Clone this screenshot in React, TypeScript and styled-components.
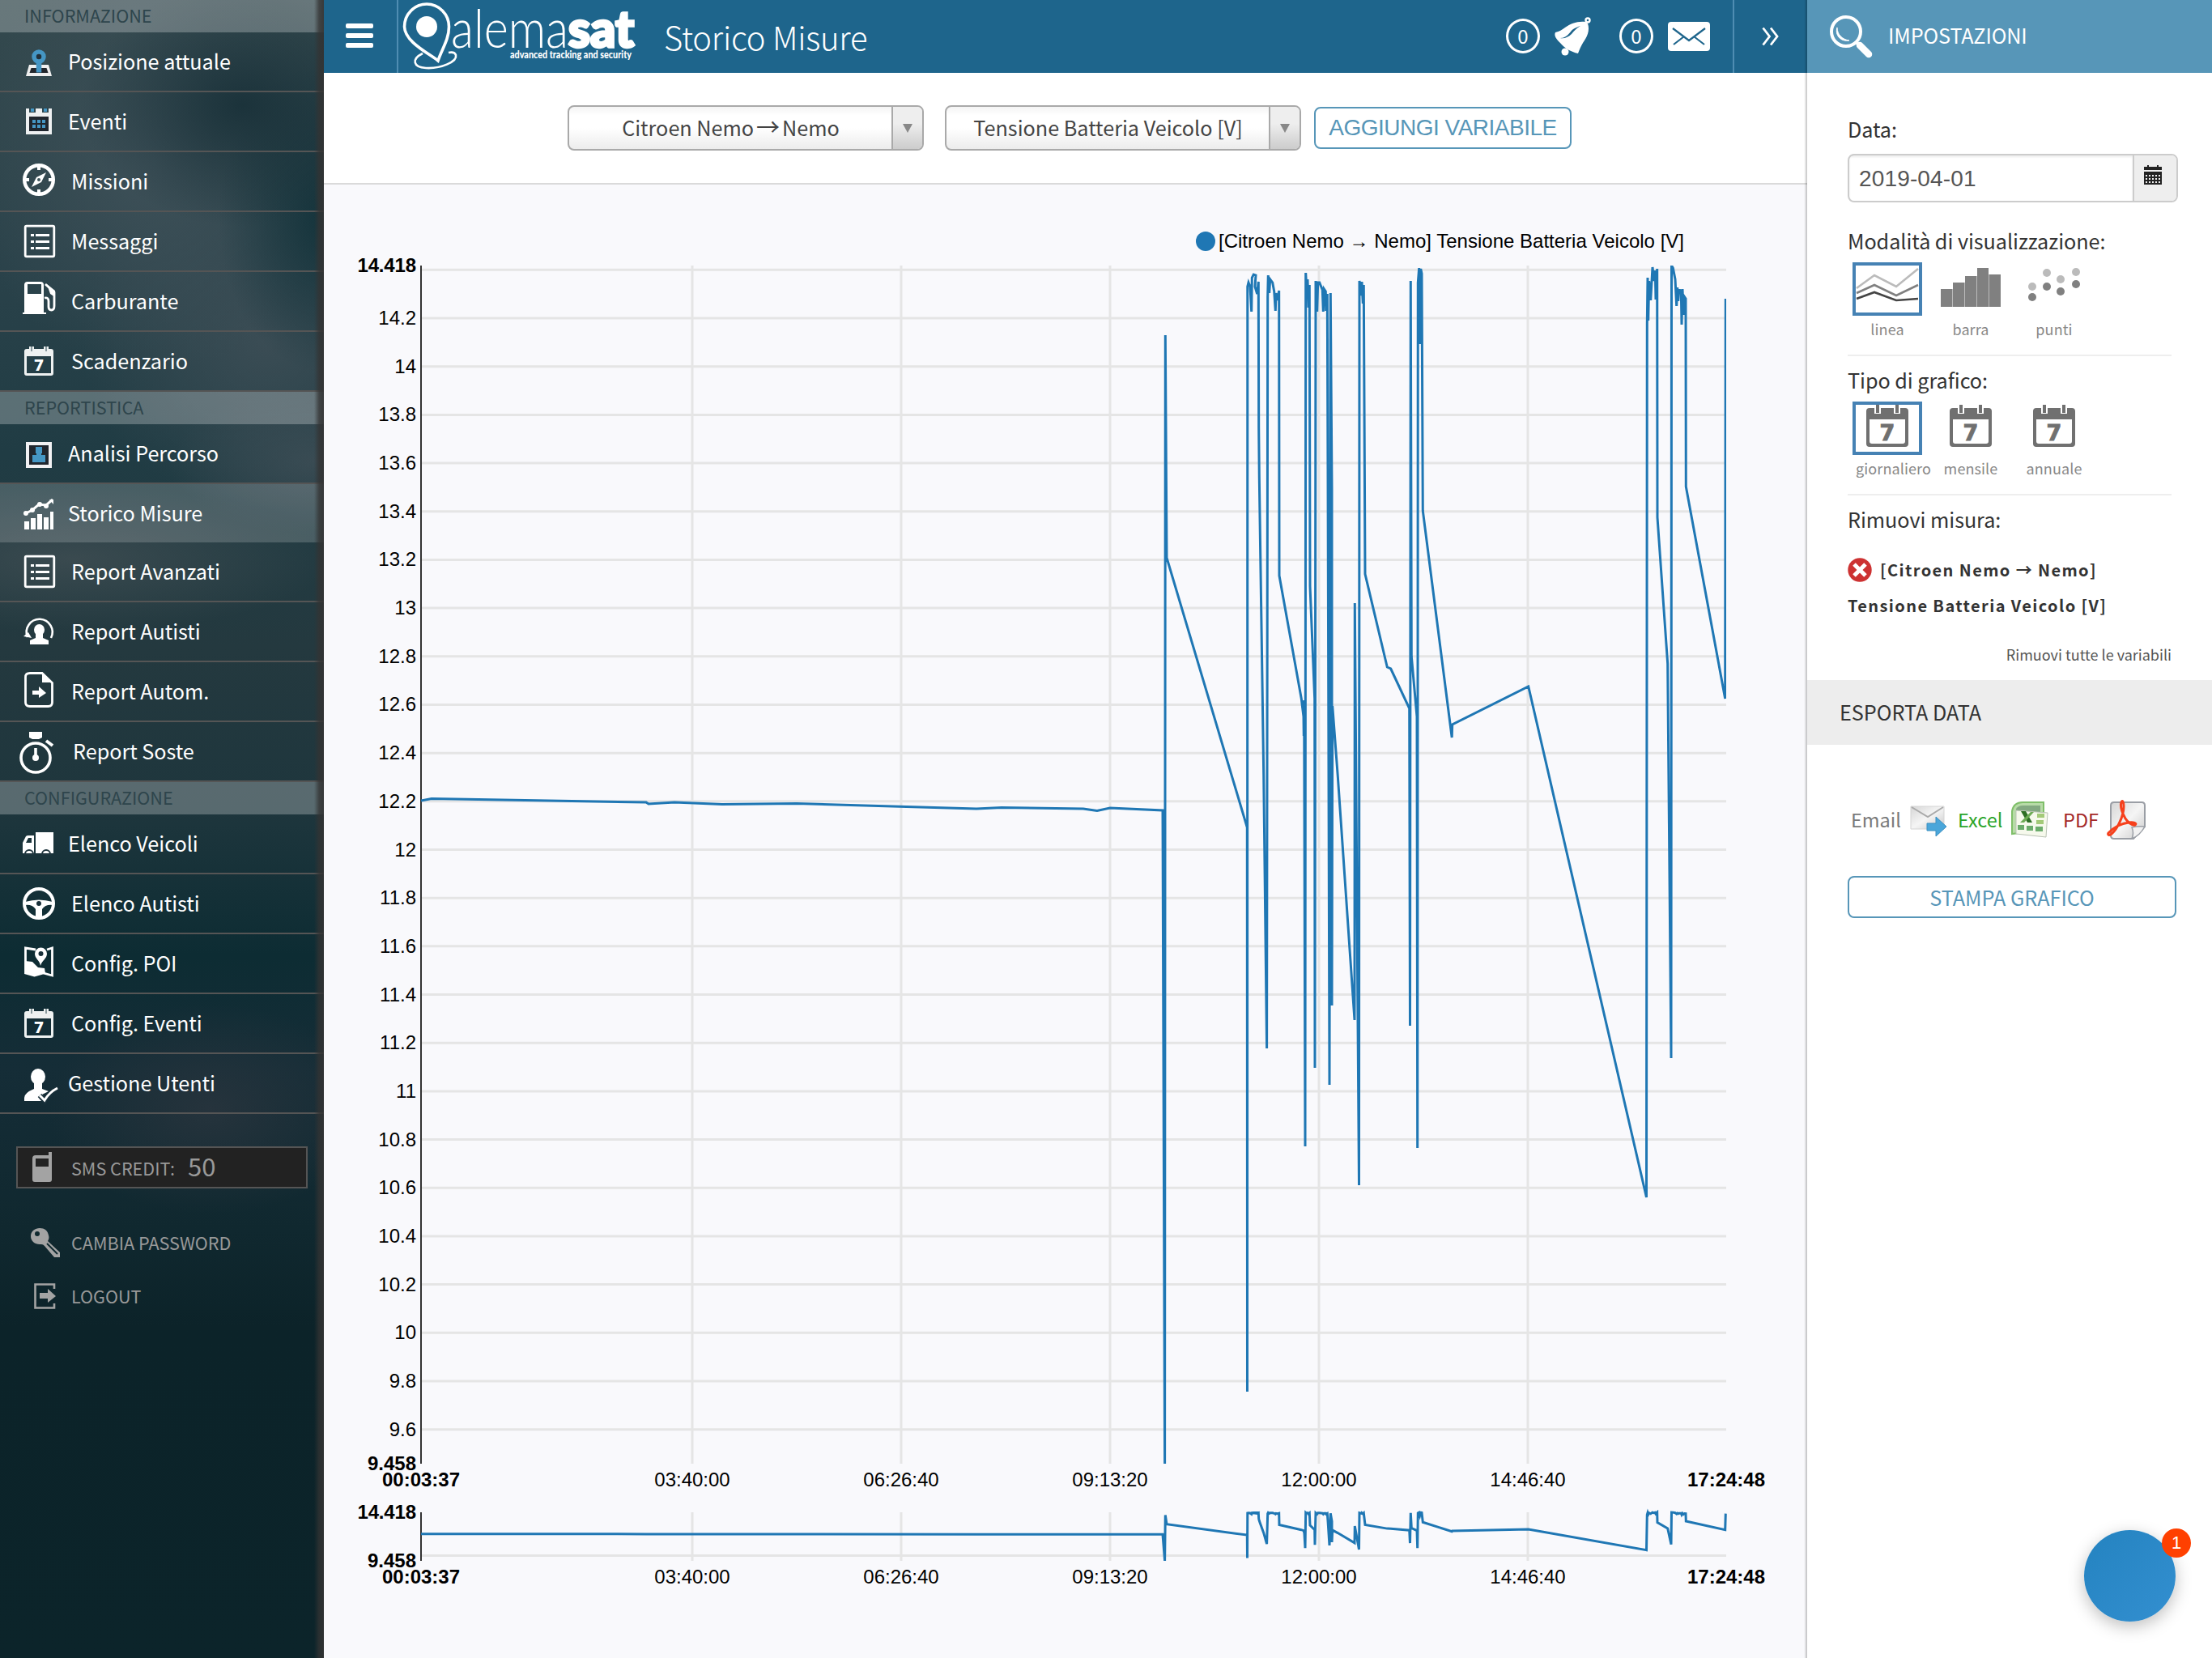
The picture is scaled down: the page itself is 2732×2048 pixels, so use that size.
import React from 'react';
import styled, { createGlobalStyle } from 'styled-components';

const sans = `'Noto Sans CJK SC', 'Noto Sans', sans-serif`;
const arial = `'Liberation Sans', Arial, sans-serif`;

const GlobalStyle = createGlobalStyle`
  * { box-sizing: border-box; }
  body {
    margin: 0;
    background: #fff;
    font-family: ${sans};
    color: #333;
  }
  svg { display: block; overflow: visible; flex-shrink: 0; }
`;

/* ---------- sidebar icons ---------- */

const PositionIcon = () => (
  <>
    <path d="M12 30h24l4 14H8z" fill="#efefef" />
    <path d="M14.500 34h19l2 6h-23z" fill="#22262c" />
    <path d="M24 24v15.500" stroke="#4596c4" strokeWidth="6.500" />
    <circle cx="24" cy="20" r="6" fill="#22303a" stroke="#4596c4" strokeWidth="5.500" />
  </>
);

const EventsIcon = () => (
  <>
    <rect x="8" y="10" width="32" height="32" fill="#eef0f1" />
    <rect x="12" y="20" width="24" height="18" fill="#20262e" />
    <path d="M12 9h8v6h-8zM28 9h8v6h-8z" fill="#2d444b" />
    <path d="M14 10h4v4h-4zM30 10h4v4h-4zM16 24h4v4h-4zM22 24h4v4h-4zM28 24h4v4h-4zM16 30h4v4h-4zM22 30h4v4h-4zM28 30h4v4h-4z" fill="#4596c4" />
  </>
);

const CompassIcon = () => (
  <>
    <circle cx="24" cy="24" r="17.800" fill="none" stroke="#fff" strokeWidth="4.400" />
    <path d="M24 6v6M24 36v6M6 24h6M36 24h6" stroke="#fff" strokeWidth="4" />
    <path d="M33 15 27 27 15 33 21 21z" fill="#fff" />
    <circle cx="24" cy="24" r="2" fill="#40565d" />
  </>
);

const ListIcon = () => (
  <>
    <rect x="7.200" y="7.200" width="35.600" height="37.600" rx="1.500" fill="none" stroke="#fff" strokeWidth="2.800" />
    <path d="M14 18.500h4M14 26.500h4M14 34.500h4M20 18.500h17M20 26.500h17M20 34.500h17" stroke="#fff" strokeWidth="3" />
  </>
);

const FuelIcon = () => (
  <>
    <path d="M6 40V6q0-4 4-4h16q4 0 4 4v34h3v2H4v-2zM10 5v12h17V5z" fill="#fff" fillRule="evenodd" />
    <path d="M31 22q5-1 5 4v7q0 4 3.500 4T43 32V15L32 5" fill="none" stroke="#fff" strokeWidth="2.800" />
    <path d="M34 5 44 13v8l-6-4z" fill="#fff" />
  </>
);

const CalendarSmallIcon = () => (
  <>
    <path d="M6 14q0-3 3-3h3V8h6v3h12V8h6v3h3q3 0 3 3v27q0 3-3 3H9q-3 0-3-3zM9 20v21h30V20z" fill="#eef1f1" fillRule="evenodd" />
    <path d="M15 8v6M33 8v6" stroke="#8a9a9e" strokeWidth="2" />
    <text x="24" y="38" fontSize="19" fontWeight="700" fontFamily="DejaVu Sans" textAnchor="middle" fill="#fff">7</text>
  </>
);

const RouteIcon = () => (
  <>
    <rect x="10" y="14" width="28" height="28" fill="#20262e" stroke="#f1f1f3" strokeWidth="4" />
    <path d="M20 18h8v8h-1v2h5v9H16v-9h5v-2h-1z" fill="#4596c4" />
  </>
);

const HistoryIcon = () => (
  <>
    <path d="M6 36h6v10H6zM14 32h6v14h-6zM22 27h6v19h-6zM30 31h6v15h-6zM38 24h4v22h-4z" fill="#fff" />
    <path d="M8 26l8-4 8-7 9 1 8-7" fill="none" stroke="#fff" strokeWidth="3" />
    <circle cx="8" cy="26" r="3" fill="#fff" />
    <circle cx="16" cy="22" r="3" fill="#fff" />
    <circle cx="25" cy="15" r="3" fill="#fff" />
    <circle cx="33" cy="17" r="3" fill="#fff" />
    <path d="M37 9h5v6z" fill="#fff" />
  </>
);

const DriverReportIcon = () => (
  <>
    <path d="M10 33a16 16 0 1 1 29 1" fill="none" stroke="#fff" strokeWidth="2.600" />
    <path d="M5 32l6-5 4 7z" fill="#fff" />
    <ellipse cx="24.500" cy="24" rx="6.500" ry="7" fill="#fff" />
    <path d="M20 28h9v6l7 3v5H13v-5l7-3z" fill="#fff" />
  </>
);

const AutoReportIcon = () => (
  <>
    <path d="M13 3.500h15l12.500 12v24q0 5-5 5H13q-5.500 0-5.500-5V8.500q0-5 5.500-5z" fill="none" stroke="#fff" strokeWidth="2.800" />
    <path d="M28 3v12h12z" fill="#fff" />
    <path d="M16 25h8v-5l9 8-9 6v-4h-8z" fill="#fff" />
  </>
);

const StopwatchIcon = () => (
  <>
    <circle cx="20" cy="34" r="18" fill="none" stroke="#fff" strokeWidth="3.600" />
    <path d="M12 2h16v7l-4 2h-8l-4-2z" fill="#fff" />
    <path d="M33 13l8 6" stroke="#fff" strokeWidth="4" />
    <path d="M20 22v11" stroke="#fff" strokeWidth="3.600" />
    <circle cx="20" cy="34" r="4" fill="#fff" />
  </>
);

const TruckIcon = () => (
  <>
    <path d="M20 12h22v26H20z" fill="#fff" />
    <path d="M4 25l4-8q1-1 3-1h7v22H4zM8 25h7v-6h-4z" fill="#fff" fillRule="evenodd" />
    <path d="M7 39a5 5 0 0 1 10 0zM28 39a5 5 0 0 1 10 0z" fill="#fff" stroke="#1f363e" strokeWidth="2" />
    <path d="M6 39h12M27 39h12" stroke="#1f363e" strokeWidth="2" />
  </>
);

const WheelIcon = () => (
  <>
    <circle cx="24" cy="26" r="18" fill="none" stroke="#fff" strokeWidth="4" />
    <path d="M7 24q17-5 34 0v4q-9-1-13 5v10h-8V33q-4-6-13-5z" fill="#fff" />
    <circle cx="24" cy="26" r="3" fill="#19303a" />
  </>
);

const MapIcon = () => (
  <>
    <path d="M20 9 7.500 7v31l11 3 11-3 11 3V7L34 9" fill="none" stroke="#fff" strokeWidth="2.800" />
    <path d="M7 23l9 1 7 7 8 1 1 6-12 3-13-3z" fill="#fff" />
    <path d="M26 29c-1-7-7-9-7-15a7.500 7.500 0 0 1 15 0c0 6-6 8-8 15z" fill="#fff" />
    <circle cx="26.500" cy="14" r="3" fill="#19303a" />
  </>
);

const UserIcon = () => (
  <>
    <ellipse cx="23" cy="18" rx="9" ry="10" fill="#fff" />
    <path d="M18 26h10v7l8 3-8 4 5 7-5 1H6v-4q0-6 12-11z" fill="#fff" />
    <path d="M25 41l6 7q6-11 16-16" fill="none" stroke="#19303a" strokeWidth="6" />
    <path d="M25 41l6 6q6-10 16-15" fill="none" stroke="#fff" strokeWidth="3" />
  </>
);

/* ---------- sidebar ---------- */

const menu = [
  {
    title: 'INFORMAZIONE',
    items: [
      { label: 'Posizione attuale', icon: PositionIcon, left: 84 },
      { label: 'Eventi', icon: EventsIcon, left: 84 },
      { label: 'Missioni', icon: CompassIcon, left: 88 },
      { label: 'Messaggi', icon: ListIcon, left: 88 },
      { label: 'Carburante', icon: FuelIcon, left: 88 },
      { label: 'Scadenzario', icon: CalendarSmallIcon, left: 88 },
    ],
  },
  {
    title: 'REPORTISTICA',
    items: [
      { label: 'Analisi Percorso', icon: RouteIcon, left: 84 },
      { label: 'Storico Misure', icon: HistoryIcon, left: 84, active: true },
      { label: 'Report Avanzati', icon: ListIcon, left: 88 },
      { label: 'Report Autisti', icon: DriverReportIcon, left: 88 },
      { label: 'Report Autom.', icon: AutoReportIcon, left: 88 },
      { label: 'Report Soste', icon: StopwatchIcon, left: 90 },
    ],
  },
  {
    title: 'CONFIGURAZIONE',
    items: [
      { label: 'Elenco Veicoli', icon: TruckIcon, left: 84 },
      { label: 'Elenco Autisti', icon: WheelIcon, left: 88 },
      { label: 'Config. POI', icon: MapIcon, left: 88 },
      { label: 'Config. Eventi', icon: CalendarSmallIcon, left: 88 },
      { label: 'Gestione Utenti', icon: UserIcon, left: 84 },
    ],
  },
];

const SideBar = () => (
  <Aside>
    {menu.map(group => (
      <React.Fragment key={group.title}>
        <GroupTitle>{group.title}</GroupTitle>
        {group.items.map(({ label, icon: Icon, left, active }: any) => (
          <MenuItem key={label} $active={active}>
            <svg width="48" height="52" viewBox="0 0 48 52"><Icon /></svg>
            <MenuLabel $left={left}>{label}</MenuLabel>
          </MenuItem>
        ))}
      </React.Fragment>
    ))}
    <SmsBox>
      <svg width="24" height="38" viewBox="0 0 24 38">
        <path d="M4 4h16V0h4v34q0 3-3 3H3q-3 0-3-3V8q0-4 4-4zM4 8v10h16V8z" fill="#a3a3a3" fillRule="evenodd" />
      </svg>
      <SmsLabel>SMS CREDIT:</SmsLabel>
      <SmsValue>50</SmsValue>
    </SmsBox>
    <FootLink>
      <svg width="36" height="38" viewBox="0 0 36 38">
        <path d="M11 1C5 1 0 5 0 11s5 10 11 10c3 0 4 0 6 2l12 14h7v-6L21 17c1-2 2-4 1-7C21 4 17 1 11 1z" fill="#a3a3a3" />
        <circle cx="8" cy="8" r="3" fill="#10292f" />
        <path d="M20 20l13 13" stroke="#10292f" strokeWidth="2" />
      </svg>
      CAMBIA PASSWORD
    </FootLink>
    <FootLink>
      <svg width="36" height="34" viewBox="0 0 36 34">
        <path d="M29 8V2.500H5.500v29H29V26" fill="none" stroke="#a3a3a3" strokeWidth="2.600" />
        <path d="M11 13h10V8l10 9-10 8v-5H11z" fill="#a3a3a3" />
      </svg>
      LOGOUT
    </FootLink>
  </Aside>
);

/* ---------- header ---------- */

const Logo = () => (
  <svg width="290" height="90" viewBox="496 0 290 90">
    <path d="M541 75C530 66 500 52 499.500 33a27.500 28 0 0 1 55 0c0 16-9 28-13.500 42z" fill="none" stroke="#fff" strokeWidth="3.600" />
    <circle cx="527" cy="33" r="13" fill="#fff" />
    <path d="M522 66c-14 7-12 17 4 18 19 1 39-8 37-16-1-3-4-4-9-3" fill="none" stroke="#fff" strokeWidth="2.600" />
    <text x="557" y="59" fontFamily="Lato" fontWeight="300" fontSize="67" textLength="145" lengthAdjust="spacingAndGlyphs" fill="#fff">alema</text>
    <text x="702" y="58" fontFamily="Lato" fontWeight="900" fontSize="63" stroke="#fff" strokeWidth="3.500" textLength="81" lengthAdjust="spacingAndGlyphs" fill="#fff">sat</text>
    <text x="630" y="72" fontFamily="Lato" fontWeight="900" fontSize="14" textLength="150" lengthAdjust="spacingAndGlyphs" fill="#fff">advanced tracking and security</text>
  </svg>
);

const Header = () => (
  <TopBar>
    <MenuToggle>
      <Bar /><Bar /><Bar />
    </MenuToggle>
    <LogoBox><Logo /></LogoBox>
    <PageTitle>Storico Misure</PageTitle>
    <Counter>0</Counter>
    <Alert $right={34}>
      <svg width="46" height="48" viewBox="0 0 46 48">
        <circle cx="41" cy="4" r="2.500" fill="none" stroke="#fff" strokeWidth="2.400" />
        <path d="M38 6C28 5 20 8 13 13 9 16 6 18 1 19c-2 4 1 8 6 13 6 7 13 11 22 13 2-5 3-8 6-13 5-7 9-15 6-24z" fill="#fff" />
        <path d="M7 26c9 0 11-7 16-11 3-2 6-3 9-4-5 3-8 6-11 10-4 4-9 6-14 5z" fill="#1e658c" />
        <circle cx="13" cy="43" r="4.500" fill="#fff" />
      </svg>
    </Alert>
    <Counter>0</Counter>
    <Alert $right={28}>
      <svg width="52" height="36" viewBox="0 0 52 36">
        <rect width="52" height="36" rx="4" fill="#fff" />
        <path d="M6 8l20 15L46 8M7 28l13-10M45 28L32 18" fill="none" stroke="#1e658c" strokeWidth="2.200" />
      </svg>
    </Alert>
    <Expand>
      <svg width="22" height="22" viewBox="0 0 22 22">
        <path d="M1.500 0.500l8 10.500-8 10.500M11 0.500l8 10.500-8 10.500" fill="none" stroke="#fff" strokeWidth="2.800" />
      </svg>
    </Expand>
  </TopBar>
);

/* ---------- chart ---------- */

// plot area of the main chart
const LEFT = 520;
const TOP = 328;
const WIDTH = 1612;
const HEIGHT = 1480;
const MINI_TOP = 1868;
const MINI_HEIGHT = 60;
const MIN = 9.458;
const MAX = 14.418;

const line: number[][] = [
  [520, 989], [533, 986.5], [798, 991], [801, 993], [833, 991], [892, 993.5], [984, 992.5], [1206, 999],
  [1237, 997.5], [1338, 999], [1355, 1001.5], [1371, 998], [1436, 1001], [1438.6, 1808], [1439.3, 414],
  [1441, 689], [1540.3, 1022], [1540.5, 1719], [1540.8, 354], [1542, 349], [1544, 354], [1545.7, 385],
  [1546.3, 343], [1548.3, 339], [1551, 340], [1550, 354], [1552.7, 363], [1554.3, 348], [1554.7, 528],
  [1555.3, 590], [1560.7, 956], [1564.6, 1295], [1565.7, 367], [1566.3, 340], [1567.7, 362], [1568.7, 345],
  [1571.7, 349], [1573.7, 360], [1575.3, 384], [1576, 362], [1578, 371], [1579.7, 359], [1580, 711],
  [1607.3, 863], [1610, 885], [1610.3, 909], [1610.7, 865], [1612, 1416], [1612.7, 337], [1613.7, 356],
  [1615, 345], [1616, 380], [1617.3, 352], [1618, 724], [1623.7, 863], [1624, 1319], [1625, 347],
  [1626.7, 385], [1627.7, 349], [1629.7, 349], [1633.3, 358], [1634.3, 385], [1635.3, 357], [1637.3, 360],
  [1637.7, 384], [1639.3, 363], [1640, 579], [1642, 1340], [1643.3, 362], [1645, 604], [1645, 1242],
  [1645.7, 872], [1652.3, 959], [1673, 1260], [1673.3, 745], [1678.5, 1464], [1679, 347], [1681.7, 365],
  [1682, 348], [1683.3, 375], [1684.3, 352], [1686, 709], [1713.3, 824], [1717.7, 826], [1740.7, 875],
  [1741.5, 1267], [1742.3, 347], [1743.3, 811], [1750, 885], [1750.7, 1418], [1751.3, 349], [1752.7, 331],
  [1753.7, 425], [1754.7, 332], [1756, 338], [1757.3, 631], [1793.2, 911], [1793.7, 895], [1887.7, 848],
  [2033.5, 1479], [2034.3, 400], [2035, 343], [2035.7, 396], [2036.7, 347], [2038.7, 371], [2041, 330],
  [2042.7, 347], [2044.3, 334], [2045, 370], [2046.7, 332], [2047, 639], [2059.7, 820], [2064, 1307],
  [2064.5, 328], [2066.3, 331], [2069, 345], [2070.7, 378], [2071.7, 355], [2072.7, 372], [2073.7, 358],
  [2076.3, 359], [2077, 401], [2078, 357], [2079.3, 389], [2080.7, 367], [2082, 369], [2082.3, 601],
  [2130.7, 863], [2131.3, 369],
];

const yTicks = Array.from({ length: 25 }, (_, i) => Math.round((9.6 + i * 0.2) * 10) / 10);
const xTicks = [
  { label: '03:40:00', x: 855 },
  { label: '06:26:40', x: 1113 },
  { label: '09:13:20', x: 1371 },
  { label: '12:00:00', x: 1629 },
  { label: '14:46:40', x: 1887 },
];

const yOf = (v: number, top: number, height: number) => top + ((MAX - v) / (MAX - MIN)) * height;

const Axes = ({ top, height, ticks, labels }: { top: number; height: number; ticks: number[]; labels?: boolean }) => (
  <g>
    {ticks.map(v => (
      <GridLine key={v} x1={LEFT} x2={LEFT + WIDTH} y1={yOf(v, top, height)} y2={yOf(v, top, height)} />
    ))}
    {xTicks.map(t => <GridLine key={t.x} x1={t.x} x2={t.x} y1={top} y2={top + height} />)}
    <path d={`M${LEFT} ${top}v${height}`} stroke="#333" strokeWidth="2" />
    {labels && ticks.filter(v => v < 14.4).map(v => (
      <Tick key={v} x="514" y={yOf(v, top, height) + 8} textAnchor="end">{v}</Tick>
    ))}
    {xTicks.map(t => <Tick key={t.x} x={t.x} y={top + height + 28} textAnchor="middle">{t.label}</Tick>)}
    <Tick $bold x="514" y={top + 8} textAnchor="end" textLength="72.500">14.418</Tick>
    <Tick $bold x="514" y={top + height + 8} textAnchor="end">9.458</Tick>
    <Tick $bold x={LEFT} y={top + height + 28} textAnchor="middle">00:03:37</Tick>
    <Tick $bold x={LEFT + WIDTH} y={top + height + 28} textAnchor="middle">17:24:48</Tick>
  </g>
);

const Chart = () => {
  const main = line.map(p => p.join(',')).join(' ');
  const mini = line.map(([x, y]) => `${x},${MINI_TOP + ((y - TOP) / HEIGHT) * MINI_HEIGHT}`).join(' ');
  return (
    <svg width="1832" height="1820" viewBox="400 228 1832 1820">
      <clipPath id="plot"><rect x={LEFT} y={TOP} width={WIDTH} height={HEIGHT} /></clipPath>
      <circle cx="1489" cy="298" r="12" fill="#1f77b4" />
      <Tick x="1505" y="306" textLength="575">[Citroen Nemo → Nemo] Tensione Batteria Veicolo [V]</Tick>
      <Axes top={TOP} height={HEIGHT} ticks={yTicks} labels />
      <Series points={main} clipPath="url(#plot)" />
      <Axes top={MINI_TOP} height={MINI_HEIGHT} ticks={[10]} />
      <Series points={mini} />
    </svg>
  );
};

/* ---------- settings panel ---------- */

const LinesIcon = () => (
  <svg width="76" height="42" viewBox="0 0 76 42">
    <g fill="none" strokeWidth="2.600">
      <path d="M0 25L22 9l27 14L76 1" stroke="#bbb" />
      <path d="M0 31l22-10 27 13 27-13" stroke="#808080" />
      <path d="M0 38l22-8 27 10 27-2" stroke="#444" />
    </g>
  </svg>
);

const BarsIcon = () => (
  <svg width="74" height="48" viewBox="0 0 74 48">
    <path d="M0 26h14v22H0zM15 18h14v30H15zM30 10h14v38H30zM45 0h14v48H45zM60 8h14v40H60z" fill="#808080" />
    <path d="M14.500 26v22M29.500 18v30M44.500 10v38M59.500 8v40" stroke="#bbb" />
  </svg>
);

const DotsIcon = () => (
  <svg width="64" height="42" viewBox="0 0 64 42">
    {[[5, 23], [23, 6], [40, 14], [59, 5]].map(([x, y]) => <circle key={x} cx={x} cy={y} r="5" fill="#bbb" />)}
    {[[5, 36], [23, 23], [40, 29], [59, 20]].map(([x, y]) => <circle key={x} cx={x} cy={y} r="5" fill="#808080" />)}
  </svg>
);

const CalendarIcon = () => (
  <svg width="52" height="52" viewBox="0 0 52 52">
    <path d="M0 8q0-4 4-4h44q4 0 4 4v40q0 4-4 4H4q-4 0-4-4zM4 18v27q0 3 3 3h38q3 0 3-3V18z" fill="#707070" fillRule="evenodd" />
    <path d="M14 0v11M38 0v11" stroke="#fff" strokeWidth="8" />
    <path d="M14 0v10M38 0v10" stroke="#707070" strokeWidth="4" />
    <text x="26" y="43.500" fontFamily="DejaVu Sans" fontWeight="700" fontSize="27" textAnchor="middle" fill="#707070" stroke="#707070">7</text>
  </svg>
);

const modes = [
  { label: 'linea', icon: LinesIcon, active: true },
  { label: 'barra', icon: BarsIcon },
  { label: 'punti', icon: DotsIcon },
];
const periods = [
  { label: 'giornaliero', icon: CalendarIcon, active: true },
  { label: 'mensile', icon: CalendarIcon },
  { label: 'annuale', icon: CalendarIcon },
];

const Options = ({ items, top }: { items: any[]; top?: boolean }) => (
  <OptionRow>
    {items.map(({ label, icon: Icon, active }) => (
      <Option key={label}>
        <OptionBox $active={active} $top={top}><Icon /></OptionBox>
        <OptionLabel>{label}</OptionLabel>
      </Option>
    ))}
  </OptionRow>
);

const Settings = () => (
  <Panel>
    <PanelHeader>
      <svg width="52" height="52" viewBox="0 0 52 52">
        <circle cx="20" cy="20" r="18" fill="none" stroke="#fff" strokeWidth="4" />
        <path d="M9 15c0 9 7 15 15 16-11 2-18-7-15-16z" fill="#fff" stroke="#fff" />
        <path d="M32 33l6 5" stroke="#fff" strokeWidth="4" />
        <path d="M37 37l11 11" stroke="#fff" strokeWidth="8.500" strokeLinecap="round" />
      </svg>
      <PanelTitle>IMPOSTAZIONI</PanelTitle>
    </PanelHeader>
    <PanelBody>
      <Heading>Data:</Heading>
      <DateField>
        <DateValue>2019-04-01</DateValue>
        <DateButton>
          <svg width="22" height="24" viewBox="0 0 22 24">
            <path d="M0 2h22v4H0zM0 8h22v16H0z" fill="#222" />
            <path d="M4 0h2v3H4zM16 0h2v3h-2z" fill="#222" />
            {[13, 17, 21].map(y => (
              <path key={y} d={`M2 ${y}h18`} stroke="#eee" strokeWidth="2" strokeDasharray="2 2" />
            ))}
          </svg>
        </DateButton>
      </DateField>
      <Heading $top={27}>Modalità di visualizzazione:</Heading>
      <Options items={modes} />
      <Divider />
      <Heading $top={9}>Tipo di grafico:</Heading>
      <Options items={periods} top />
      <Divider />
      <Heading $top={9}>Rimuovi misura:</Heading>
      <Measure>
        <MeasureLine>
          <svg width="30" height="30" viewBox="0 0 30 30">
            <circle cx="15" cy="15" r="14.700" fill="#cd3232" />
            <path d="M8 8l14 14M22 8L8 22" stroke="#fff" strokeWidth="5" />
          </svg>
          [Citroen Nemo → Nemo]
        </MeasureLine>
        <MeasureLine>Tensione Batteria Veicolo [V]</MeasureLine>
      </Measure>
      <RemoveAll>Rimuovi tutte le variabili</RemoveAll>
    </PanelBody>
    <Band>ESPORTA DATA</Band>
    <ExportRow>
      <ExportLabel $color="#7a7a7a">Email</ExportLabel>
      <svg width="44" height="38" viewBox="0 -3 44 38">
        <defs>
          <linearGradient id="paper" x1="0" y1="0" x2="1" y2="1">
            <stop offset="0" stopColor="#d6d6d6" /><stop offset=".5" stopColor="#f5f5f5" /><stop offset="1" stopColor="#c9c9c9" />
          </linearGradient>
        </defs>
        <path d="M0 0h41v28H0z" fill="url(#paper)" stroke="#d5d5d5" />
        <path d="M1 1l20 12L40 1" fill="none" stroke="#aaa" strokeWidth="2" />
        <path d="M20 21h11v-8l13 12-13 12v-7H20z" fill="#4aa6da" stroke="#3b8fc0" />
      </svg>
      <ExportLabel $color="#2ba52b">Excel</ExportLabel>
      <svg width="46" height="46" viewBox="0 -1 46 46">
        <path d="M1 40V12Q3 1 14 1h26v34z" fill="#b7dba7" stroke="#7fbf69" strokeWidth="2" />
        <path d="M6 9q3-4 8-4h22v8H6z" fill="#83a981" />
        <path d="M6 11l39 3-2 30-37-4z" fill="#f6f9ec" stroke="#b9c2b3" />
        <path d="M32 15h9v5h-9zM31 23h9v5h-9z" fill="#a3ca78" />
        <path d="M8 29h8v6H8zM19 30h8v6h-8zM30 31h9v6h-9z" fill="#6bac6b" />
        <path d="M12 12h6l8 14h-6z" fill="#2d6e24" />
        <path d="M24 13h4L16 26h-5z" fill="#6dab55" />
      </svg>
      <ExportLabel $color="#a52a2a">PDF</ExportLabel>
      <svg width="48" height="48" viewBox="0 -1 48 48">
        <path d="M9 2h34q4 0 4 4v26L33 47H9q-4 0-4-4V6q0-4 4-4z" fill="url(#paper)" stroke="#9a9ea5" strokeWidth="2" />
        <path d="M47 32q-8-1-16 1 3 7 0 14 10-4 16-15z" fill="#f2f2f2" stroke="#9a9ea5" strokeWidth="1.500" />
        <path d="M18 2c-2 6 1 13 5 20 3 5 9 9 12 8 3-2-2-4-8-3-9 1-19 6-25 13-1 2 1 4 4 1 7-6 15-22 15-34 0-6-2-8-3-5z" fill="none" stroke="#f6401c" strokeWidth="3" />
      </svg>
    </ExportRow>
    <PrintButton>STAMPA GRAFICO</PrintButton>
  </Panel>
);

const Select = ({ children }: { children: React.ReactNode }) => (
  <SelectBox>
    <SelectText>{children}</SelectText>
    <SelectArrow>
      <svg width="12" height="11" viewBox="0 0 12 11"><path d="M0 0h12L6 11z" fill="#888" /></svg>
    </SelectArrow>
  </SelectBox>
);

const App = () => (
  <Page>
    <GlobalStyle />
    <SideBar />
    <Main>
      <Header />
      <Toolbar>
        <Select>Citroen Nemo<Arrow>→</Arrow>Nemo</Select>
        <Select>Tensione Batteria Veicolo [V]</Select>
        <AddButton>AGGIUNGI VARIABILE</AddButton>
      </Toolbar>
      <Chart />
    </Main>
    <Settings />
    <Bubble><Badge>1</Badge></Bubble>
  </Page>
);

export default App;

const Page = styled.div`
  display: flex;
  width: 2732px;
  height: 2048px;
  overflow: hidden;
`;
const Aside = styled.aside`
  position: relative;
  width: 400px;
  flex-shrink: 0;
  display: flex;
  flex-direction: column;
  background:
    radial-gradient(ellipse 200px 150px at 300px 130px, rgba(24, 48, 56, 0.9), transparent),
    radial-gradient(ellipse 130px 190px at 400px 270px, rgba(18, 50, 58, 0.9), transparent),
    radial-gradient(ellipse 230px 260px at 190px 200px, rgba(64, 82, 90, 0.9), transparent),
    radial-gradient(ellipse 230px 210px at 330px 420px, rgba(64, 80, 88, 0.8), transparent),
    radial-gradient(ellipse 180px 90px at 390px 570px, rgba(62, 78, 86, 0.8), transparent),
    radial-gradient(ellipse 320px 90px at 90px 690px, rgba(64, 78, 83, 0.8), transparent),
    radial-gradient(ellipse 200px 130px at 260px 1370px, rgba(42, 53, 62, 0.8), transparent),
    linear-gradient(180deg, #34494e 0, #2a424a 330px, #203c44 560px, #24393f 800px, #1e363d 1000px, #0d2c33 1180px, #152d37 1320px, #10282f 1520px, #0c2329 1640px, #0c242a 2048px);

  /* shadow that the page casts on the menu */
  &::after {
    content: '';
    position: absolute;
    top: 0;
    right: 0;
    bottom: 0;
    width: 12px;
    background: linear-gradient(90deg, rgba(51, 51, 51, 0), rgba(51, 51, 51, 0.75) 50%, rgba(51, 51, 51, 0.9));
  }
`;
const GroupTitle = styled.div`
  height: 40px;
  padding-left: 30px;
  background: rgba(255, 255, 255, 0.26);
  color: #2e454c;
  font-size: 21.6px;
  line-height: 37px;
`;
const MenuItem = styled.div<{ $active?: boolean }>`
  display: flex;
  height: ${p => (p.$active ? 72 : 74)}px;
  border-bottom: ${p => (p.$active ? 'none' : '2px solid #555')};
  background: ${p => (p.$active ? 'rgba(255, 255, 255, 0.18)' : 'none')};
  padding: 10px 0 0 24px;
`;
const MenuLabel = styled.span<{ $left: number }>`
  margin-left: ${p => p.$left - 72}px;
  color: #fff;
  font-size: 25.2px;
  line-height: 51px;
  letter-spacing: -0.02px;
`;
const SmsBox = styled.div`
  display: flex;
  align-items: center;
  margin: 40px 20px 0;
  height: 52px;
  border: 2px solid #555;
  background: #222;
  color: #999;
  padding-left: 18px;
`;
const SmsLabel = styled.span`
  margin-left: 24px;
  font-size: 21.6px;
  line-height: 48px;
  padding-top: 1px;
`;
const SmsValue = styled.span`
  margin-left: 16px;
  padding-bottom: 5px;
  font-size: 31px;
  line-height: 43px;
`;
const FootLink = styled.div`
  display: flex;
  align-items: center;
  gap: 14px;
  height: 66px;
  padding-left: 38px;
  color: #999;
  font-size: 21.6px;
  line-height: 40px;
  ${SmsBox} + & { margin-top: 34px; }
`;

const Main = styled.main`
  width: 1832px;
  flex-shrink: 0;
  display: flex;
  flex-direction: column;
  background: #f9f9fc;
`;
const TopBar = styled.header`
  display: flex;
  align-items: center;
  height: 90px;
  background: #1e658c;
  color: #fff;
`;
const MenuToggle = styled.div`
  display: flex;
  flex-direction: column;
  justify-content: center;
  gap: 6px;
  width: 92px;
  height: 90px;
  padding: 0 0 3px 27px;
  border-right: 2px solid #4f8db2;
`;
const Bar = styled.span`
  width: 34px;
  height: 6px;
  border-radius: 2px;
  background: #fff;
`;
const LogoBox = styled.div`
  width: 328px;
  padding-left: 4px;
`;
const PageTitle = styled.h1`
  flex: 1;
  margin: 0;
  font-size: 40px;
  font-weight: 300;
  line-height: 90px;
  letter-spacing: -0.25px;
`;
const Counter = styled.span`
  width: 42px;
  height: 43px;
  margin-bottom: 1px;
  border: 3px solid #fff;
  border-radius: 50%;
  text-align: center;
  font-size: 24px;
  line-height: 35px;
`;
const Alert = styled.span<{ $right: number }>`
  margin: 0 ${p => p.$right}px 0 18px;
`;
const Expand = styled.div`
  display: flex;
  align-items: center;
  justify-content: center;
  width: 92px;
  height: 90px;
  border-left: 2px solid #4f8db2;
`;
const Toolbar = styled.div`
  display: flex;
  align-items: center;
  height: 138px;
  padding-left: 301px;
  border-bottom: 2px solid #dadada;
  background: #fff;
`;
const SelectBox = styled.div`
  display: flex;
  width: 440px;
  height: 56px;
  margin-right: 26px;
  border: 2px solid #a9a9a9;
  border-radius: 8px;
  overflow: hidden;
  background: linear-gradient(#f4f4f4 0, #fff 20%, #fff 50%, #ececec 100%);
  & + & { margin-right: 16px; }
`;
const SelectText = styled.span`
  flex: 1;
  padding-left: 1px;
  text-align: center;
  color: #444;
  font-size: 25.2px;
  line-height: 51px;
  white-space: nowrap;
`;
const Arrow = styled.span`
  margin: 0 3px;
  font-size: 29px;
  line-height: 1;
`;
const SelectArrow = styled.span`
  display: flex;
  align-items: center;
  justify-content: center;
  width: 38px;
  border-left: 2px solid #a9a9a9;
  background: linear-gradient(#eee 40%, #ccc);
`;
const AddButton = styled.button`
  width: 318px;
  height: 52px;
  padding: 0;
  border: 2px solid #5796b8;
  border-radius: 8px;
  background: #fff;
  color: #5796b8;
  font: 28px ${arial};
  letter-spacing: -0.5px;
  white-space: nowrap;
`;

const Tick = styled.text<{ $bold?: boolean }>`
  font-family: ${arial};
  font-size: 24px;
  font-weight: ${p => (p.$bold ? 700 : 400)};
  fill: #000;
`;
const GridLine = styled.line`
  stroke: #e5e5e5;
  stroke-width: 3px;
`;
const Series = styled.polyline`
  fill: none;
  stroke: #1f77b4;
  stroke-width: 3px;
`;

const Panel = styled.section`
  width: 500px;
  flex-shrink: 0;
  background: #fff;
  box-shadow: 0 0 2px 2px rgba(0, 0, 0, 0.22);
`;
const PanelHeader = styled.div`
  display: flex;
  align-items: center;
  gap: 20px;
  height: 90px;
  padding-left: 28px;
  background: #5796b8;
  color: #fff;
`;
const PanelTitle = styled.span`
  padding-bottom: 4px;
  font-size: 25.2px;
  line-height: 80px;
  letter-spacing: -0.1px;
`;
const PanelBody = styled.div`
  padding: 49px 50px 18px;
`;
const Heading = styled.div<{ $top?: number }>`
  margin-top: ${p => p.$top || 0}px;
  font-size: 25.2px;
  line-height: 40px;
  letter-spacing: -0.05px;
  white-space: nowrap;
`;
const DateField = styled.div`
  display: flex;
  width: 408px;
  height: 60px;
  margin-top: 11px;
  border: 2px solid #ccc;
  border-radius: 8px;
  overflow: hidden;
`;
const DateValue = styled.span`
  flex: 1;
  padding-left: 12px;
  box-shadow: inset 0 2px 3px rgba(0, 0, 0, 0.08);
  color: #555;
  font: 28px/58px ${arial};
  letter-spacing: 0.15px;
`;
const DateButton = styled.span`
  width: 54px;
  padding: 12px 0 0 12px;
  border-left: 2px solid #ccc;
  background: #eee;
`;
const OptionRow = styled.div`
  display: flex;
  gap: 17px;
  margin: 7px 0 18px 6px;
`;
const Option = styled.div`
  display: flex;
  flex-direction: column;
  width: 86px;
`;
const OptionBox = styled.div<{ $active?: boolean; $top?: boolean }>`
  display: flex;
  justify-content: center;
  height: 66px;
  padding-top: ${p => (p.$top ? 0 : 5)}px;
  border: 4px solid ${p => (p.$active ? '#4682b4' : 'transparent')};
  & > svg { margin-top: ${p => (p.$top ? 0 : -2)}px; }
`;
const OptionLabel = styled.span`
  min-width: 100%;
  align-self: flex-start;
  margin-top: 2px;
  padding: 0 4px;
  color: #888;
  font-size: 18px;
  line-height: 28px;
  letter-spacing: 0.1px;
  text-align: center;
`;
const Divider = styled.div`
  height: 2px;
  background: #eee;
`;
const Measure = styled.div`
  margin-top: 21px;
`;
const MeasureLine = styled.div`
  display: flex;
  align-items: center;
  gap: 10px;
  height: 44px;
  font-size: 20px;
  font-weight: 700;
  line-height: 44px;
  letter-spacing: 1.4px;
  white-space: nowrap;
`;
const RemoveAll = styled.div`
  margin-top: 24px;
  color: #555;
  font-size: 18px;
  line-height: 28px;
  text-align: right;
`;
const Band = styled.div`
  height: 80px;
  padding-left: 40px;
  background: #ededed;
  font-size: 25.2px;
  line-height: 78px;
`;
const ExportRow = styled.div`
  display: grid;
  grid-template-columns: 74px 58px 66px 64px 54px 50px;
  align-items: center;
  height: 64px;
  margin: 60px 0 38px 54px;
`;
const ExportLabel = styled.span<{ $color: string }>`
  color: ${p => p.$color};
  font-size: 23.5px;
  line-height: 60px;
`;
const PrintButton = styled.button`
  display: block;
  width: 406px;
  height: 52px;
  margin-left: 50px;
  padding: 0 0 1px;
  border: 2px solid #5796b8;
  border-radius: 8px;
  background: #fff;
  color: #5796b8;
  font: 25.2px/44px ${sans};
`;
const Bubble = styled.div`
  position: absolute;
  left: 2574px;
  top: 1890px;
  width: 113px;
  height: 113px;
  border-radius: 50%;
  background: linear-gradient(135deg, #2483c0, #338fd0);
  box-shadow: 0 6px 20px rgba(0, 0, 0, 0.25);
`;
const Badge = styled.span`
  position: absolute;
  right: -19px;
  top: -2px;
  width: 36px;
  height: 36px;
  border-radius: 50%;
  background: #ff4000;
  color: #fff;
  font: 22px/36px ${arial};
  text-align: center;
`;
